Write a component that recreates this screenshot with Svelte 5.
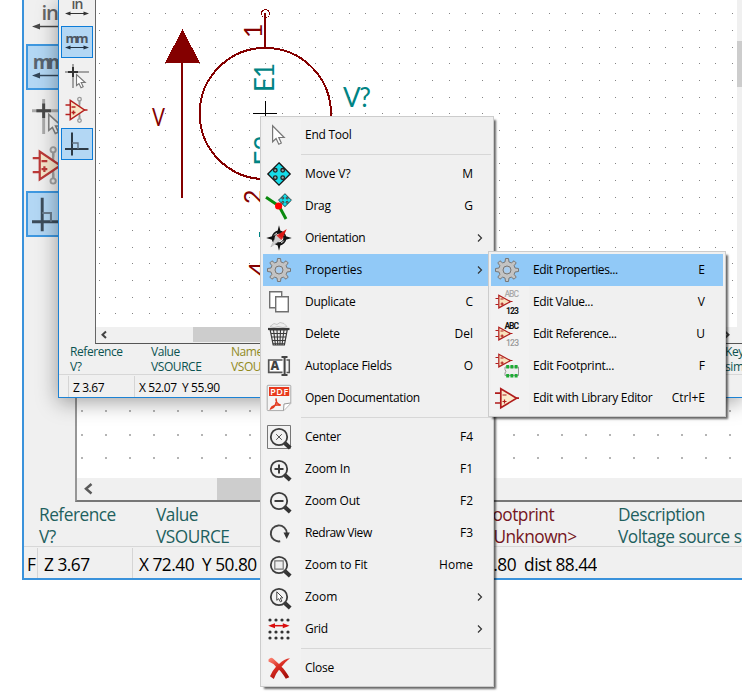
<script>
  const mag = '<circle cx="12" cy="12" r="8.2" fill="none" stroke="#3c3c3c" stroke-width="1.8"/><path d="M18 18.2l5.2 4.8" stroke="#333" stroke-width="4"/><path d="M17 17l3 3" stroke="#3c3c3c" stroke-width="1.6"/>';

  const gearPath = (() => {
    const pts = [];
    for (let i = 0; i < 8; i++) {
      const a = (i * Math.PI) / 4;
      for (const [d, r] of [[-0.24, 8.3], [-0.13, 11.6], [0.13, 11.6], [0.24, 8.3]]) {
        pts.push(`${(12 + r * Math.sin(a + d)).toFixed(2)} ${(12 - r * Math.cos(a + d)).toFixed(2)}`);
      }
    }
    return 'M' + pts.join('L') + 'Z';
  })();

  const moveShape = '<path d="M12 .8L23.2 12 12 23.2.8 12Z" fill="#16dce8" stroke="#151515" stroke-width="1.3"/><g fill="#9aa" stroke="#222" stroke-width="1.300"><circle cx="8.300" cy="8.300" r="1.800"/><circle cx="15.700" cy="8.300" r="1.800"/><circle cx="8.300" cy="15.700" r="1.800"/><circle cx="15.700" cy="15.700" r="1.800"/></g>';

  const smallAmp = '<g stroke="#b01c1c" stroke-width="1.2" fill="none"><path d="M.5 8.500h3M.5 14.500h3M15.500 11.500h2"/><path d="M3.800 5.300v12.600L15.500 11.600Z" fill="#f8e2bd"/><path d="M5.500 9h3M5.500 14h3.200M7.100 12.500v3"/></g>';

  const icons = {
    cursor: '<path d="M5.600 2.800v16l3.500-3.300 2.700 5.700 2.500-1.200-2.500-5.500h5.400Z" fill="#fff" stroke="#777" stroke-width="1.200"/>',
    move: moveShape,
    drag: `<g transform="translate(11 -.8) scale(.58)">${moveShape}</g><path d="M-1 3.200L12 12l7 13" fill="none" stroke="#0b8a0f" stroke-width="3"/><circle cx="11.600" cy="12" r="3.600" fill="#f00"/>`,
    orientation: '<circle cx="12" cy="12" r="6.600" fill="none" stroke="#161616" stroke-width="1.600"/><path d="M12-.8l2.200 8.600 3 2L24.800 12l-7.600 2.200-3 2L12 24.800l-2.200-8.600-3-2L-.8 12l7.600-2.200 3-2Z" fill="#111"/><circle cx="12" cy="12" r="4.300" fill="#eee"/><path d="M19.800 3l-4.600 10-4.700-4Z" fill="#dc1713"/><path d="M3.800 21l5.700-12 5 4.500Z" fill="#cfcfcf" stroke="#999" stroke-width=".4"/><path d="M9.500 9.500l4.800 4.500 1.200-1.500-4.800-4Z" fill="#d33"/>',
    gear: `<path d="${gearPath}" fill="#c3c3c3" stroke="#777" stroke-width="1"/><circle cx="12" cy="12" r="4" fill="none" stroke="#777"/><circle cx="12" cy="12" r="3" fill="#a8cdf0"/>`,
    duplicate: '<g fill="#fff" stroke="#707070" stroke-width="1.400"><path d="M2.700 1.700h12v16h-12z"/><path d="M8.700 6.700h12.600v15h-12.600z"/></g>',
    trash: '<path d="M3 4.500l4-3 3 1 3-2 4 1 3 3-4 1-5-1-4 1Z" fill="#eee" stroke="#bbb" stroke-width=".8"/><path d="M1 7h21.500" stroke="#3a3a3a" stroke-width="2.200"/><path d="M3.200 8h17l-2.800 15H6.200Z" fill="#ececec" stroke="#3a3a3a" stroke-width="1.200"/><path d="M6.500 8l2 15M10 8l.8 15M13.500 8l-.6 15M17 8l-2 15M4 11.500h15.800M4.500 15h14.600M5 18.500h13.500M5.800 21.800h12" stroke="#3a3a3a" stroke-width="1.100"/>',
    autoplace: '<path d="M15.500 6H1.700v12.400h13.800" fill="#fff" stroke="#555" stroke-width="1.700"/><path d="M19.500 6h2.800v12.400h-2.800" fill="none" stroke="#555" stroke-width="1.500"/><text x="3.600" y="16.300" font-family="Open Sans,sans-serif" font-weight="800" font-size="12" fill="#444">A</text><path d="M14.500 2.900h6M17.600 3v18M14.500 21h6" stroke="#444" stroke-width="2" fill="none"/>',
    pdf: '<path d="M1-.7h22q.8 0 .8.8v17.300l-7 7.200H.8q-.6 0-.6-.8V0q0-.7.8-.7Z" fill="#f5f5f5" stroke="#aaa"/><path d="M2 1h20.200v9H2z" fill="#e8391d"/><text x="3.200" y="8.900" textLength="18" font-family="Open Sans,sans-serif" font-weight="600" font-size="9" fill="#fff">PDF</text><path d="M9 12.500c1.500 4-1 9-5.300 10.300 1-3.500 6-4.500 10-3.500-3-1-5-4-4.700-6.800Z" fill="none" stroke="#e23b20" stroke-width="1.500"/><path d="M16.500 24.500l.5-6.500 6.500-1" fill="#fff" stroke="#999"/>',
    center: `<path d="M.5.5h23v23H.5z" fill="none" stroke="#777"/>${mag}<path d="M9.200 9.200l5.600 5.600M14.800 9.200l-5.600 5.600" stroke="#555" stroke-width="1"/>`,
    zoomIn: `${mag}<path d="M7.500 12h9M12 7.500v9" stroke="#3c3c3c" stroke-width="2"/>`,
    zoomOut: `${mag}<path d="M7.500 12h9" stroke="#3c3c3c" stroke-width="2"/>`,
    redraw: '<path d="M19.800 12.500a8 8 0 1 0-6.600 7.800" fill="none" stroke="#454545" stroke-width="1.900"/><path d="M16.500 11.500h6.300l-3.100 6.500Z" fill="#333"/>',
    zoomFit: `${mag}<path d="M7.800 7.800h8.400v8.400H7.800z" fill="#eee" stroke="#777" stroke-width="1.200"/>`,
    zoomSel: `${mag}<path d="M9.800 6.800v8.500l1.900-1.600 1.700 3.200 1.500-.8-1.600-3.100 2.500-.2Z" fill="#fff" stroke="#444" stroke-width="1"/>`,
    grid: '<g fill="#333">' + [3, 15, 21].map((y) => [3, 9, 15, 21].map((x) => `<circle cx="${x}" cy="${y}" r="1.600"/>`).join('')).join('') + '</g><path d="M4 8.700h16" stroke="#d90d0d" stroke-width="1.500"/><path d="M1.200 8.700l6.800-2.500v5ZM22.600 8.700l-6.800-2.500v5Z" fill="#d90d0d"/>',
    close: '<defs><linearGradient id="xg" x1="0" y1="0" x2=".6" y2="1"><stop offset="0" stop-color="#ff8a78"/><stop offset=".5" stop-color="#d92c22"/><stop offset="1" stop-color="#a60f0b"/></linearGradient></defs><path d="M1.500 3.500Q4 .8 6 2.500L12 8Q17 2.700 23 2.200 18 6 14.500 10.800 18 14 22.300 21.300L18.800 22.800Q15 16.500 12 13.800 8.500 18 6.800 23L3 20.200Q5.500 14.500 9 10.800 6 7 1.500 5.500Z" fill="url(#xg)"/>',
    value: `${smallAmp}<g font-family="Roboto,sans-serif" font-size="8.500" font-weight="500"><text x="9.500" y="7.300" textLength="14.500" fill="#aaa">ABC</text><text x="11" y="24" textLength="13" fill="#111" font-weight="700">123</text></g>`,
    reference: `${smallAmp}<g font-family="Roboto,sans-serif" font-size="8.500" font-weight="500"><text x="9.500" y="7.300" textLength="14.500" fill="#111" font-weight="700">ABC</text><text x="11" y="24" textLength="13" fill="#999">123</text></g>`,
    footprint: `<g transform="translate(0 -5)">${smallAmp}</g><path d="M10 13h13.500v8.500H10v-2.500q1.800-1.700 0-3.400Z" fill="#eee" stroke="#999"/><path d="M11.200 11h3v3.500h-3zM15.400 11h3v3.500h-3zM19.600 11h3v3.500h-3zM11.200 20h3v3.500h-3zM15.400 20h3v3.500h-3zM19.600 20h3v3.500h-3z" fill="#1cab33"/>`,
    library: '<g stroke="#b01c1c" stroke-width="1.700" fill="none"><path d="M0 7.200h5M0 17h5M21 12.200h3"/><path d="M5.800 2.700v19L21.600 12.200Z" fill="#fbeacb"/><path d="M7.500 9h4M7.500 15.500h4M9.500 13.500v4" stroke-width="1.200"/></g>',
    inch: '<text x="6.500" y="12.800" textLength="12" font-family="Open Sans,sans-serif" font-size="14" font-weight="600" fill="#555">in</text><path d="M3 17.500h18" stroke="#333"/><path d="M0 17.500l5.500-2v4ZM24 17.500l-5.500-2v4Z" fill="#333"/>',
    mm: '<text x=".5" y="12.800" textLength="23" font-family="Open Sans,sans-serif" font-size="13" font-weight="700" fill="#4c5560">mm</text><path d="M3 17.500h18" stroke="#234"/><path d="M0 17.500l5.500-2v4ZM24 17.500l-5.500-2v4Z" fill="#234"/>',
    crosshair: '<path d="M0 8h24M8 0v24" stroke="#a2a2a2" stroke-width="2"/><path d="M3 8h10M8 3v10" stroke="#333" stroke-width="2"/><path d="M11.500 10.500v11l2.500-2 2 4.200 2.200-1-2-4.200h4Z" fill="#fff" stroke="#777" stroke-width="1.100"/>',
    pins: '<path d="M14.500 2v20" stroke="#999" stroke-width="1.600"/><g stroke="#b5211f" stroke-width="1.500" fill="none"><path d="M.5 7h4.500M.5 16.500h4.500M19 12h3.500"/><path d="M5.300 2.500v19L19.500 12Z" fill="#f8e6c6"/><path d="M6.500 9h4M6.500 14.500h4M8.500 12.500v4"/></g><path d="M14.500 2v4M14.500 17.500v4" stroke="#999" stroke-width="1.600"/><g fill="#eee" stroke="#999" stroke-width="1.300"><circle cx="14.500" cy="1.200" r="1.800"/><circle cx="14.500" cy="22.600" r="1.800"/></g>',
    ortho: '<path d="M7 .5v23M0 17h23.500" stroke="#2d3a46" stroke-width="2"/><path d="M7 11h6v6" fill="none" stroke="#5f7080" stroke-width="1.400"/>'
  };

  const toolbar = [['inch'], ['mm', true], ['crosshair'], ['pins'], ['ortho', true]];

  const menu = [
    { i: 'cursor', t: 'End Tool' },
    null,
    { i: 'move', t: 'Move V?', k: 'M', ls: -0.1 },
    { i: 'drag', t: 'Drag', k: 'G' },
    { i: 'orientation', t: 'Orientation', sub: true, ls: -0.36 },
    { i: 'gear', t: 'Properties', sub: true, on: true, ls: -0.1 },
    { i: 'duplicate', t: 'Duplicate', k: 'C' },
    { i: 'trash', t: 'Delete', k: 'Del' },
    { i: 'autoplace', t: 'Autoplace Fields', k: 'O' },
    { i: 'pdf', t: 'Open Documentation', ls: -0.34 },
    null,
    { i: 'center', t: 'Center', k: 'F4' },
    { i: 'zoomIn', t: 'Zoom In', k: 'F1', ls: -0.15 },
    { i: 'zoomOut', t: 'Zoom Out', k: 'F2', ls: -0.2 },
    { i: 'redraw', t: 'Redraw View', k: 'F3', ls: -0.45 },
    { i: 'zoomFit', t: 'Zoom to Fit', k: 'Home', ls: -0.1 },
    { i: 'zoomSel', t: 'Zoom', sub: true, ls: 0 },
    { i: 'grid', t: 'Grid', sub: true },
    null,
    { i: 'close', t: 'Close' }
  ];

  const submenu = [
    { i: 'gear', t: 'Edit Properties...', k: 'E', on: true, ls: -0.4 },
    { i: 'value', t: 'Edit Value...', k: 'V', ls: -0.38 },
    { i: 'reference', t: 'Edit Reference...', k: 'U', ls: -0.4 },
    { i: 'footprint', t: 'Edit Footprint...', k: 'F' },
    { i: 'library', t: 'Edit with Library Editor', k: 'Ctrl+E', ls: -0.33 }
  ];

  const dots = [];
  for (let r = 0; r < 20; r++)
    for (let c = 0; c < 39; c++)
      dots.push([Math.floor(3.01 + (c * 50) / 3), Math.floor(13.7 + (r * 50) / 3)]);

  const bigDots = [];
  for (const y of [410, 434, 457]) for (let c = 0; c < 28; c++) bigDots.push([Math.round(4 + c * 24), y]);
</script>

{#snippet icon(name, size)}
  <svg class="icon" width={size} height={size} viewBox="0 0 24 24">{@html icons[name]}</svg>
{/snippet}

{#snippet tools(size)}
  <div class="toolbar">
    {#each toolbar as [name, active]}
      <div class="tool" class:active>{@render icon(name, size)}</div>
    {/each}
  </div>
{/snippet}

{#snippet popup(items)}
  {#each items as it}
    {#if it}
      <div class="item" class:on={it.on}>
        <span class="gutter">{@render icon(it.i, 24)}</span>
        <span class="label" style:letter-spacing="{it.ls ?? -0.27}px">{it.t}</span>
        {#if it.k}<span class="key">{it.k}</span>{/if}
        {#if it.sub}<svg class="chev" width="6" height="10" viewBox="0 0 6 10"><path d="M1 1.500L4.500 5 1 8.500" fill="none" stroke="#333" stroke-width="1.200"/></svg>{/if}
      </div>
    {:else}
      <div class="sep"></div>
    {/if}
  {/each}
{/snippet}

<div class="desktop">
  <section class="window outer">
    <div class="work">
      {@render tools(35)}
      <div class="view">
        <svg class="sheet" width="665" height="478" shape-rendering="crispEdges">
          {#each bigDots as [x, y]}<rect {x} {y} width="2" height="2" fill="#b4b4b4"/>{/each}
        </svg>
        <div class="hscroll">
          <svg width="26" height="22" viewBox="0 0 26 22"><path d="M14.500 6L9 10.800l5.500 4.700" fill="none" stroke="#5a5a5a" stroke-width="2.500"/></svg>
          <div class="thumb"></div>
        </div>
      </div>
    </div>
    <div class="fields">
      <div>Reference<br>V?</div>
      <div>Value<br>VSOURCE</div>
      <div class="maroon">Footprint<br>&lt;Unknown&gt;</div>
      <div>Description<br>Voltage source s</div>
    </div>
    <div class="status"><span>F</span><span>Z 3.67</span><span>X 72.40  Y 50.80</span><span class="delta">50.80  dist 88.44</span></div>
  </section>

  <section class="window inner">
    <div class="work">
      {@render tools(24)}
      <div class="view">
        <svg class="sheet" width="641" height="327" viewBox="0 0 641 327">
          <g shape-rendering="crispEdges">
            {#each dots as [x, y]}<rect {x} {y} width="1" height="1" fill="#848484"/>{/each}
          </g>
          <g stroke="#840000" stroke-width="2" fill="none" shape-rendering="crispEdges">
            <path d="M86 62V198M169 13V48"/>
            <path d="M86.500 29L104 63H69Z" fill="#840000" stroke="none"/>
            <circle cx="169.300" cy="113.500" r="65.600"/>
            <circle cx="169.500" cy="13.500" r="4" stroke-width="1"/>
          </g>
          <path d="M157 113.500h24M169.500 101v24" stroke="#000" shape-rendering="crispEdges"/>
          <rect x="163" y="232" width="2" height="5" fill="#008484"/>
          <g class="plot">
            <text transform="translate(166 38) rotate(-90)" fill="#840000" font-size="25">1</text>
            <text transform="translate(178 92) rotate(-90)" fill="#008484" font-size="26" textLength="29">E1</text>
            <text transform="translate(178 165.500) rotate(-90)" fill="#008484" font-size="26" textLength="30">E2</text>
            <text transform="translate(165.500 204) rotate(-90)" fill="#840000" font-size="25">2</text>
            <text transform="translate(171 276) rotate(-90)" fill="#840000" font-size="25">4</text>
            <text x="247" y="107" fill="#008484" font-size="26" textLength="28">V?</text>
            <text x="56" y="125.500" fill="#840000" font-size="25" textLength="13" lengthAdjust="spacingAndGlyphs">V</text>
          </g>
        </svg>
        <div class="vscroll">
          <div class="thumb"></div>
        </div>
        <div class="hscroll">
          <svg width="18" height="15" viewBox="0 0 18 15"><path d="M10 4.500L6.500 7.700 10 11" fill="none" stroke="#444" stroke-width="2"/></svg>
          <div class="thumb"></div>
          <svg class="fwd" width="18" height="15" viewBox="0 0 18 15"><path d="M5 4.500L8.500 7.700 5 11" fill="none" stroke="#444" stroke-width="2"/></svg>
        </div>
      </div>
    </div>
    <div class="fields">
      <div>Reference<br>V?</div>
      <div>Value<br>VSOURCE</div>
      <div class="olive">Name<br>VSOURCE</div>
      <div>Key<br>simu</div>
    </div>
    <div class="status"><span></span><span>Z 3.67</span><span>X 52.07  Y 55.90</span></div>
  </section>

  <div class="menu main">{@render popup(menu)}</div>
  <div class="menu subm">{@render popup(submenu)}</div>
</div>

<style>
  .desktop {
    position: relative;
    width: 742px;
    height: 694px;
    overflow: hidden;
    background: #fff;
    font-family: "Open Sans", "Noto Sans", sans-serif;
    font-size: 12px;
    color: #000;
  }
  .window {
    position: absolute;
    top: 0;
    right: 0;
    box-sizing: border-box;
    display: flex;
    flex-direction: column;
    overflow: hidden;
    background: #f0f0f0;
  }
  .outer {
    left: 22px;
    height: 580px;
    border-left: 2px solid #3a92db;
    border-bottom: 2px solid #3a92db;
    font-size: 17.3px;
    letter-spacing: -0.5px;
  }
  .inner {
    left: 58px;
    height: 398px;
    border-left: 1px solid #1c82d4;
    border-bottom: 1px solid #1c82d4;
    box-shadow: 0 4px 20px rgba(0, 0, 0, 0.38);
    letter-spacing: -0.42px;
  }
  .work { display: flex; flex: none; }
  .outer .work { height: 502px; }
  .inner .work { height: 344px; }
  .icon { display: block; overflow: visible; flex: none; letter-spacing: 0; }
  .outer .icon { opacity: 0.88; }
  .toolbar { box-sizing: border-box; display: flex; flex-direction: column; flex: none; }
  .outer .toolbar { width: 51px; gap: 3px; padding-left: 2px; margin-top: -5px; }
  .inner .toolbar { width: 36px; gap: 2px; padding-left: 2px; margin-top: -8px; }
  .tool {
    box-sizing: border-box;
    flex: none;
    display: flex;
    align-items: center;
    justify-content: center;
    border: 1px solid transparent;
  }
  .outer .tool { width: 46px; height: 46px; border-width: 2px; }
  .inner .tool { width: 32px; height: 32px; }
  .tool.active { background: #b3d7f4; border-color: #0d7cd8; }
  .outer .tool.active { border-color: #3f98e0; }
  .view { flex: 1; min-width: 0; background: #fff; display: grid; }
  .outer .view { border-left: 2px solid #969696; border-bottom: 2px solid #777; grid-template-rows: 478px 22px; }
  .inner .view { border-left: 1px solid #666; border-bottom: 1px solid #555; grid-template: 327px 16px / 641px 1fr; }
  .sheet { display: block; }
  .plot { letter-spacing: 0; font-family: Lato, sans-serif; font-weight: 400; }
  .hscroll { display: flex; background: #f0f0f0; }
  .inner .hscroll { grid-column: 1 / 3; }
  .outer .hscroll .thumb { margin-left: 114px; width: 240px; background: #cdcdcd; }
  .inner .hscroll .thumb { margin-left: 79px; width: 360px; height: 15px; background: #cdcdcd; }
  .fwd { margin-left: auto; margin-right: 4px; }
  .vscroll { background: #f0f0f0; padding-top: 41px; }
  .vscroll .thumb { height: 46px; background: #cdcdcd; }
  .fields {
    display: grid;
    flex: none;
    box-sizing: border-box;
    color: #0b5351;
    white-space: nowrap;
    border-bottom: 1px solid #d7d7d7;
  }
  .outer .fields { height: 45px; grid-template-columns: 117px 328px 134px 200px; padding: 2px 0 0 15px; line-height: 21.500px; color: #1e605e; }
  .inner .fields { height: 31px; grid-template-columns: 81px 80px 494px 60px; padding: 1px 0 0 11px; line-height: 14.700px; }
  .outer .fields .maroon { color: #741522; }
  .inner .fields .olive { color: #918a1d; }
  .status { display: flex; white-space: pre; flex: 1; }
  .status span { box-sizing: border-box; border-right: 1px solid #d5d5d5; margin: 1px 0; overflow: hidden; flex: none; }
  .status span:nth-child(3), .status span:nth-child(4) { border: 0; }
  .outer .status { line-height: 34px; }
  .outer .status span:nth-child(1) { width: 14px; padding-left: 3px; }
  .outer .status span:nth-child(2) { width: 95px; padding-left: 6px; }
  .outer .status span:nth-child(3) { width: 200px; padding-left: 6px; }
  .outer .status .delta { width: 264px; text-align: right; }
  .inner .status { line-height: 23px; }
  .inner .status span:nth-child(1) { width: 10px; }
  .inner .status span:nth-child(2) { width: 66px; padding-left: 4px; }
  .inner .status span:nth-child(3) { width: 200px; padding-left: 4px; }
  .menu {
    position: absolute;
    box-sizing: border-box;
    padding: 2px;
    border: 1px solid #ccc;
    background: #f0f0f0;
    box-shadow: 3px 3px 2px -1px rgba(0, 0, 0, 0.6);
  }
  .main { left: 260px; top: 116px; width: 234px; }
  .subm { left: 488px; top: 251px; width: 238px; }
  .item { display: flex; align-items: center; height: 32px; }
  .gutter { width: 38px; height: 32px; box-sizing: border-box; padding: 4px; flex: none; background: #f2f2f2; }
  .on, .on .gutter { background: #91c9f7; }
  .label { padding: 0 0 2px 4px; white-space: nowrap; flex: 1; }
  .key { padding: 0 18px 2px 0; white-space: nowrap; }
  .chev { margin-right: 8px; }
  .sep { height: 7px; box-sizing: border-box; border-left: 38px solid #f2f2f2; background: linear-gradient(#d7d7d7, #d7d7d7) 0 3px / 100% 1px no-repeat; }
</style>
